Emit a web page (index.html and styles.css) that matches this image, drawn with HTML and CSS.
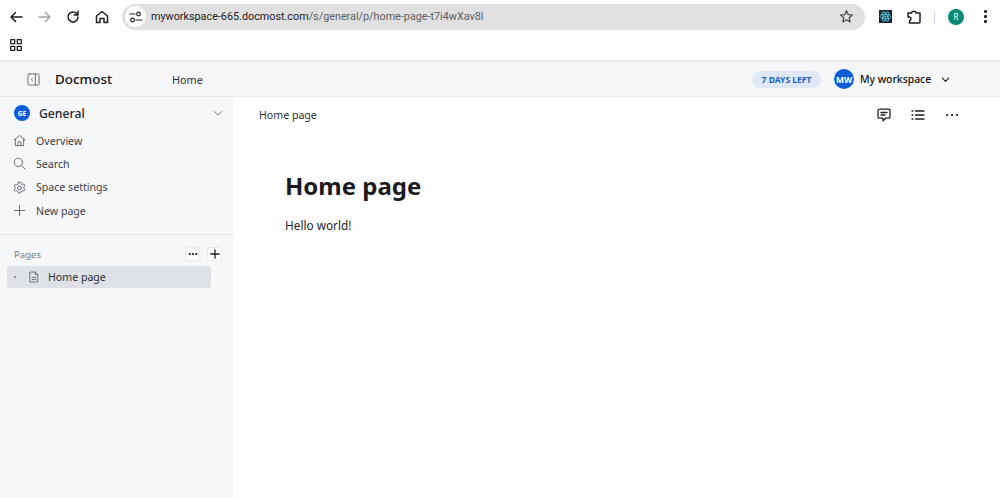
FILE: index.html
```html
<!DOCTYPE html>
<html lang="en">
<head>
<meta charset="utf-8">
<title>Home page</title>
<link rel="stylesheet" href="styles.css">
</head>
<body>
<div class="toolbar">
  <div class="nav">
    <svg class="ic" viewBox="0 0 16 16"><path d="M14 8H3M7.500 3.500 3 8l4.500 4.500" class="s15"/></svg>
    <svg class="ic" viewBox="0 0 16 16"><path d="M2 8h11M8.500 3.500 13 8l-4.500 4.500" class="s15 dim"/></svg>
    <svg class="ic" viewBox="0 0 16 16"><path d="M13 8a5 5 0 1 1-1.500-3.600L13 6M13 2v4H9" class="s15"/></svg>
    <svg class="ic" viewBox="0 0 16 16"><path d="M2.500 7 8 2.500 13.500 7v6.500h-3.500V9.500H6v4H2.500z" class="s15"/></svg>
  </div>
  <div class="omnibox">
    <span class="tune"><svg viewBox="0 0 14 14" class="tune-ic"><path d="M1 4h5M7 10h6" class="s12"/><circle cx="9.500" cy="4" r="1.800" class="s12"/><circle cx="3.500" cy="10" r="1.800" class="s12"/></svg></span>
    <span class="url">myworkspace-665.docmost.com<span class="url-dim">/s/general/p/home-page-t7i4wXav8l</span></span>
    <svg class="star" viewBox="0 0 16 16"><path d="M8 1.800 9.800 6l4.500.4-3.400 3 1 4.400L8 11.500l-3.900 2.300 1-4.400-3.400-3L6.200 6z" class="s13 soft"/></svg>
  </div>
  <div class="ext">
    <svg class="react" viewBox="0 0 16 16"><rect width="16" height="16" fill="#20232a"/><g fill="none" stroke="#61dafb" stroke-width="1"><ellipse cx="8" cy="8" rx="6.500" ry="2.600"/><ellipse cx="8" cy="8" rx="6.500" ry="2.600" transform="rotate(60 8 8)"/><ellipse cx="8" cy="8" rx="6.500" ry="2.600" transform="rotate(120 8 8)"/></g><circle cx="8" cy="8" r="1.300" fill="#61dafb"/></svg>
    <svg class="puzzle" viewBox="0 0 16 16"><path d="M2 4h3.500a2.300 2.300 0 0 1 4.500 0h4v9a1 1 0 0 1-1 1H3.500v-2.300a1.900 1.900 0 0 0 0-3.700H2z" class="s15"/></svg>
    <span class="sep"></span>
    <span class="profile">R</span>
    <span class="kebab"><i></i><i></i><i></i></span>
  </div>
</div>
<div class="bookmarks">
  <svg class="apps" viewBox="0 0 12 12"><path d="M.7.700h4v4h-4zM7.300.700h4v4h-4zM.7 7.300h4v4h-4zM7.300 7.300h4v4h-4z" class="s13"/></svg>
</div>
<header class="app-head">
  <svg class="collapse" viewBox="0 0 14 14"><rect x="1" y="1" width="12" height="12" rx="1.500" class="s1 grey"/><path d="M9 1v12M6 5.500 4.500 7 6 8.500" class="s1 grey"/></svg>
  <span class="brand">Docmost</span>
  <span class="home-link">Home</span>
  <span class="spacer"></span>
  <span class="trial">7 DAYS LEFT</span>
  <span class="avatar big">MW</span>
  <span class="ws">My workspace</span>
  <svg class="ws-chev" viewBox="0 0 10 10"><path d="M1.500 3.500 5 7l3.500-3.500" class="s13"/></svg>
</header>
<div class="main">
  <aside class="side">
    <div class="space">
      <span class="avatar small">GE</span>
      <span class="space-name">General</span>
      <svg class="space-chev" viewBox="0 0 12 12"><path d="M1.500 4 6 8.500 10.500 4" class="s1 grey"/></svg>
    </div>
    <nav class="menu">
      <div class="item"><svg viewBox="0 0 14 14"><path d="M1 6.500 7 1.500l6 5M2.500 5.500V12.500h9V5.500M5.500 12.500V8.500h3v4" class="s1 grey"/></svg>Overview</div>
      <div class="item"><svg viewBox="0 0 14 14"><circle cx="5.800" cy="5.800" r="4.500" class="s1 grey"/><path d="M9.200 9.200 13 13" class="s1 grey"/></svg>Search</div>
      <div class="item"><svg viewBox="0 0 14 14"><path d="M5.800 1.200h2.400l.4 1.600 1.500.8 1.500-.5 1.200 2.100-1.100 1.100v1.400l1.100 1.100-1.200 2.100-1.500-.5-1.500.8-.4 1.600H5.800l-.4-1.600-1.500-.8-1.500.5L1.200 9.300l1.100-1.100V6.800L1.200 5.700l1.200-2.100 1.500.5 1.500-.8z" class="s1 grey"/><circle cx="7" cy="7.500" r="2" class="s1 grey"/></svg>Space settings</div>
      <div class="item"><svg viewBox="0 0 14 14"><path d="M7 1.500v11M1.500 7h11" class="s1 grey"/></svg>New page</div>
    </nav>
    <div class="pages-head">
      <span class="pages-label">Pages</span>
      <span class="mini"><svg viewBox="0 0 10 10"><path d="M1.800 5h.1M5 5h.1M8.200 5h.1" class="dots"/></svg></span>
      <span class="mini"><svg viewBox="0 0 10 10"><path d="M5 .8v8.400M.8 5h8.400" class="s13"/></svg></span>
    </div>
    <div class="tree-row">
      <span class="bullet"></span>
      <svg class="doc" viewBox="0 0 12 14"><path d="M1.500 1h6l3 3v9h-9zM7.500 1v3h3M3.800 7.500h4.400M3.800 10h4.400" class="s1 grey"/></svg>
      <span>Home page</span>
    </div>
  </aside>
  <main class="content">
    <div class="page-bar">
      <span class="crumb">Home page</span>
      <span class="spacer"></span>
      <svg class="bar-ic" viewBox="0 0 14 14"><path d="M2.500 1.200h9a1.500 1.500 0 0 1 1.500 1.500v6a1.500 1.500 0 0 1-1.500 1.500H8.500L6.200 12.800 5.800 10.200H2.500A1.500 1.500 0 0 1 1 8.700v-6a1.500 1.500 0 0 1 1.500-1.500zM4 4.500h6M4 7h4" class="s13"/></svg>
      <svg class="bar-ic" viewBox="0 0 14 14"><path d="M4.500 3H13M4.500 7H13M4.500 11H13M1 3h.9M1 7h.9M1 11h.9" class="s13"/></svg>
      <svg class="bar-ic" viewBox="0 0 14 14"><path d="M2 7h.1M7 7h.1M12 7h.1" class="dots"/></svg>
    </div>
    <article class="doc-body">
      <h1>Home page</h1>
      <p>Hello world!</p>
    </article>
  </main>
</div>
</body>
</html>
```
FILE: styles.css
```css
* { box-sizing: border-box; }
html, body { margin: 0; height: 100%; overflow: hidden; }
body { width: 1000px; height: 498px; background: #fff; color: #1f1f1f; font-family: "Noto Sans", "Open Sans", sans-serif; display: flex; flex-direction: column; }

.s15, .s13, .s12, .s1, .dots { fill: none; stroke: #1f1f1f; stroke-linecap: round; stroke-linejoin: round; }
.s15 { stroke-width: 1.5; }
.s13 { stroke-width: 1.3; }
.s12 { stroke-width: 1.2; }
.s1 { stroke-width: 1; }
.dots { stroke-width: 2.200; }
.dim { stroke: #a3a3a3; }
.grey { stroke: #5f646c; }
.soft { stroke: #444; }

.toolbar { height: 33px; display: flex; align-items: center; }
.nav { display: flex; width: 122px; padding-left: 8px; gap: 12.500px; align-items: center; flex: none; }
.ic { width: 16px; height: 16px; flex: none; }
.omnibox { flex: none; width: 743px; height: 26px; border-radius: 13px; background: #e0e0e0; display: flex; align-items: center; padding: 0 8px 0 3px; }
.tune { width: 21px; height: 21px; border-radius: 50%; background: #fff; display: flex; align-items: center; justify-content: center; flex: none; }
.tune-ic { width: 14px; height: 14px; }
.url { font-family: Roboto, sans-serif; font-size: 10.800px; margin-left: 5px; color: #202124; white-space: nowrap; }
.url-dim { color: #5b5e62; }
.star { width: 15px; height: 15px; margin-left: auto; margin-right: 3px; }
.ext { display: flex; align-items: center; flex: none; padding-left: 14px; }
.react { width: 13px; height: 13px; }
.puzzle { width: 16px; height: 16px; margin-left: 14px; }
.sep { width: 1px; height: 12px; background: #dcc8f0; margin-left: 12px; }
.profile { width: 16px; height: 16px; border-radius: 50%; background: #0b8a73; color: #fff; font-size: 8px; display: flex; align-items: center; justify-content: center; margin-left: 13px; }
.kebab { display: flex; flex-direction: column; gap: 2.500px; margin-left: 20px; }
.kebab i { width: 2.500px; height: 2.500px; border-radius: 50%; background: #1f1f1f; }

.bookmarks { height: 27px; padding: 6px 0 0 10px; }
.apps { width: 12px; height: 12px; display: block; }

.app-head { height: 37px; border-top: 2px solid #e9eaec; border-bottom: 1px solid #e9ecef; background: #f6f7f9; display: flex; align-items: center; padding-left: 27px; padding-right: 50px; flex: none; }
.collapse { width: 13px; height: 13px; flex: none; }
.brand { font-size: 13.400px; font-weight: 500; color: #111; margin-left: 15px; width: 117px; }
.home-link { font-size: 10.800px; color: #2c2e33; }
.spacer { flex: 1; }
.trial { height: 17px; width: 69px; border-radius: 9px; background: #dee8f6; color: #1565c0; font-size: 8.500px; font-weight: 700; display: flex; align-items: center; justify-content: center; white-space: nowrap; }
.avatar { border-radius: 50%; background: #0b5cd9; color: #fff; font-weight: 700; display: flex; align-items: center; justify-content: center; flex: none; }
.avatar.big { width: 20px; height: 20px; font-size: 8.500px; margin-left: 13px; }
.ws { font-size: 10.400px; font-weight: 500; color: #111; margin-left: 6px; width: 71px; white-space: nowrap; }
.ws-chev { width: 9px; height: 9px; margin-left: 10px; }

.main { flex: 1; display: flex; min-height: 0; }
.side { width: 234px; flex: none; background: #f6f7f9; }
.space { display: flex; align-items: center; height: 30px; padding: 0 11px 0 14px; margin-top: 1px; }
.avatar.small { width: 16px; height: 16px; font-size: 6.500px; }
.space-name { font-size: 12.200px; color: #25262b; margin-left: 9px; font-weight: 500; }
.space-chev { width: 10px; height: 10px; margin-left: auto; }
.menu { border-bottom: 1px solid #e6e8eb; padding: 1px 0 12px; }
.item { height: 23.300px; display: flex; align-items: center; padding-left: 13px; font-size: 10.600px; color: #3a3d44; }
.item svg { width: 13px; height: 13px; margin-right: 10px; flex: none; }
.pages-head { display: flex; align-items: center; height: 20px; margin-top: 9px; padding: 0 12px 0 14px; gap: 7px; }
.pages-label { font-size: 9.500px; color: #868e96; font-weight: 500; margin-right: auto; }
.mini { width: 15px; height: 14px; border-radius: 3px; background: #fff; border: 1px solid #e6e8eb; display: flex; align-items: center; justify-content: center; }
.mini svg { width: 10px; height: 10px; }
.tree-row { height: 22px; width: 204px; margin: 2px 0 0 7px; border-radius: 3px; background: #dee2e6; display: flex; align-items: center; padding-left: 7px; font-size: 10.600px; color: #2c2e33; }
.bullet { width: 2px; height: 2px; border-radius: 50%; background: #777; }
.doc { width: 10px; height: 12px; margin-left: 13px; margin-right: 9px; }

.content { flex: 1; min-width: 0; }
.page-bar { height: 35px; display: flex; align-items: center; padding: 0 41px 0 25px; gap: 20px; }
.crumb { font-size: 10.600px; color: #2c2e33; }
.bar-ic { width: 14px; height: 14px; flex: none; }
.doc-body { padding: 0 0 0 51px; }
.doc-body h1 { margin: 37px 0 0; font-size: 24px; line-height: 33px; font-weight: 700; color: #1b1b1b; }
.doc-body p { margin: 14px 0 0; font-size: 11.800px; line-height: 18px; color: #25262b; }
```
